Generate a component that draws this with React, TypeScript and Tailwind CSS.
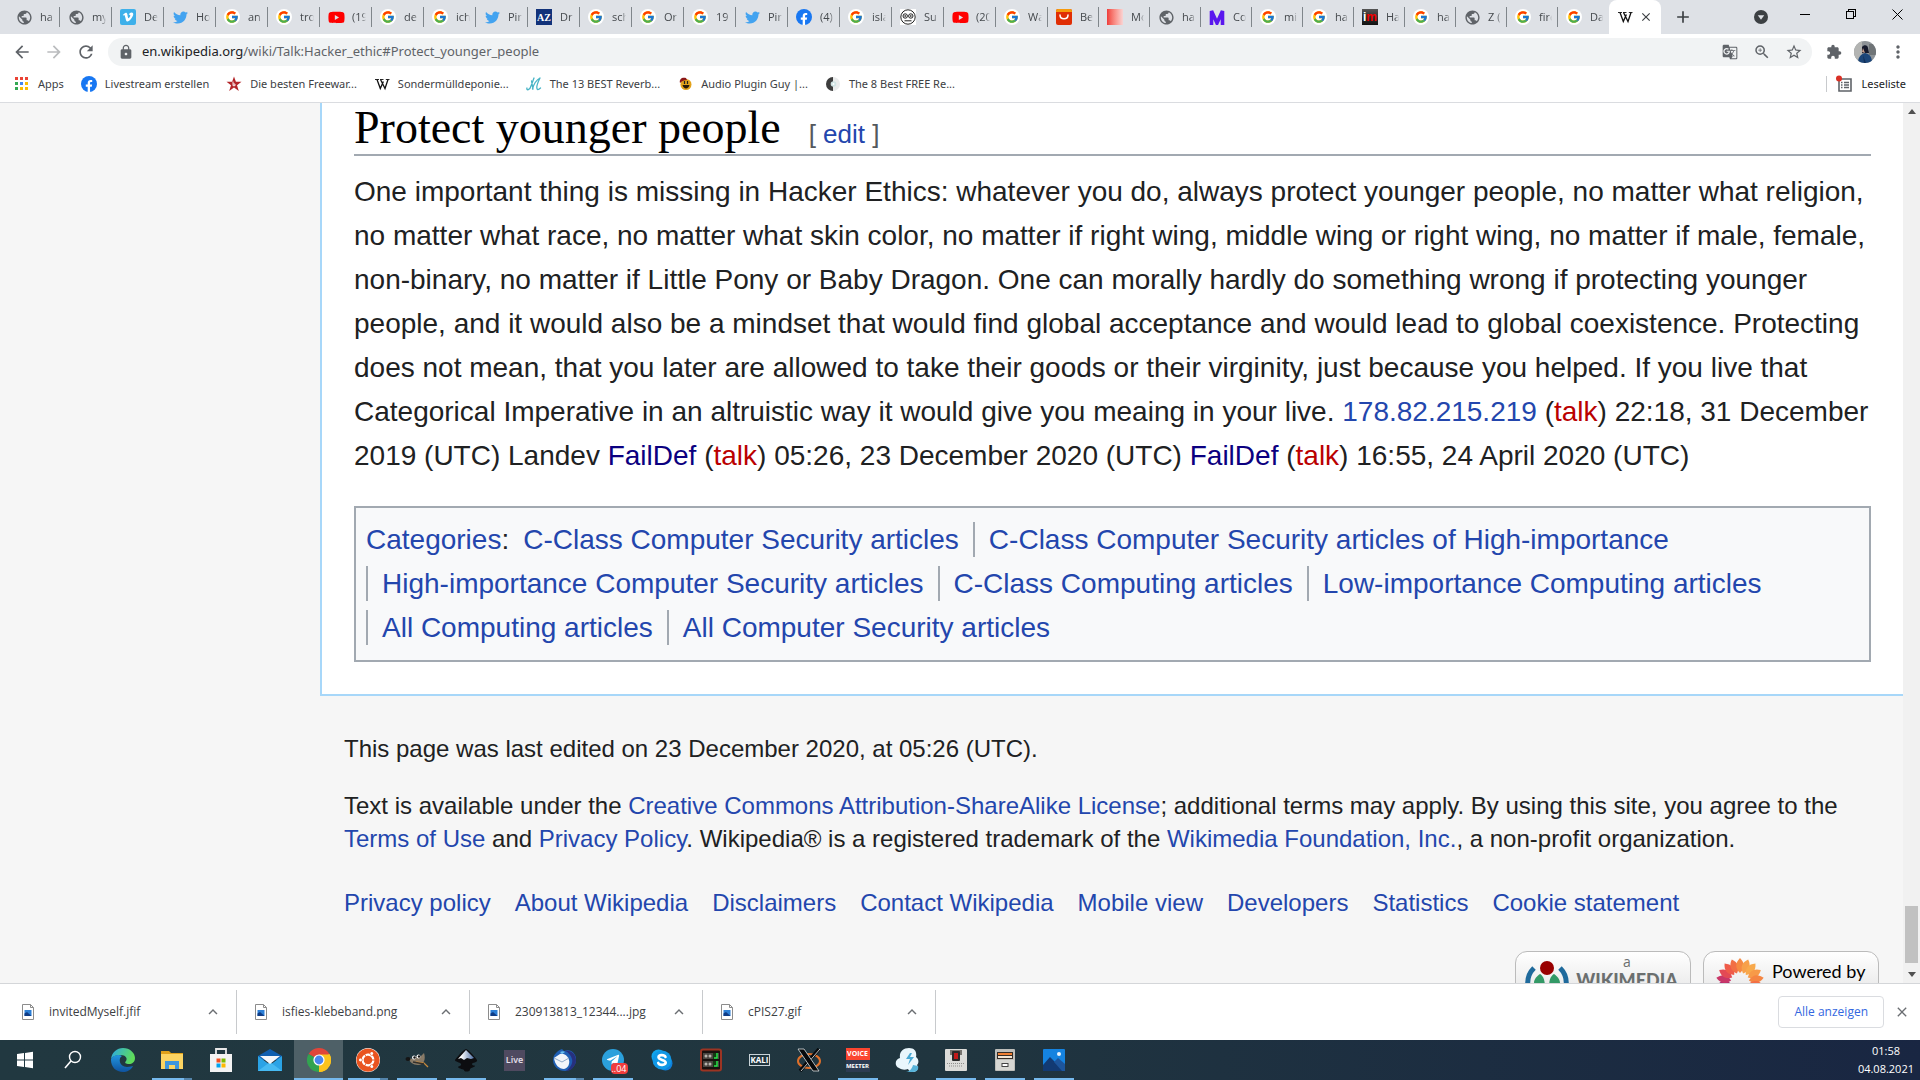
import React from 'react';
import { FcGoogle } from 'react-icons/fc';
import { FaTwitter, FaVimeoV, FaFacebookF, FaYoutube, FaUbuntu, FaTelegramPlane } from 'react-icons/fa';
import {
  MdAdd, MdArrowBack, MdArrowForward, MdClose, MdExtension, MdGTranslate, MdLock, MdMoreVert,
  MdPublic, MdRefresh, MdStarBorder, MdZoomIn, MdKeyboardArrowUp,
} from 'react-icons/md';

type Kind =
  | 'globe' | 'vimeo' | 'twitter' | 'google' | 'youtube' | 'az' | 'facebook' | 'face'
  | 'ali' | 'red' | 'm' | 'im' | 'wiki';

function Favicon({ kind }: { kind: Kind }) {
  switch (kind) {
    case 'globe':
      return <MdPublic className="size-[17px] shrink-0 text-[#5f6368]" />;
    case 'vimeo':
      return (
        <span className="flex size-4 shrink-0 items-center justify-center rounded-xs bg-[#3eb0ea]">
          <FaVimeoV className="size-3 text-white" />
        </span>
      );
    case 'twitter':
      return <FaTwitter className="size-[15px] shrink-0 text-[#43a3f0]" />;
    case 'google':
      return (
        <span className="flex size-4 shrink-0 items-center justify-center rounded-full bg-white">
          <FcGoogle className="size-[14px]" />
        </span>
      );
    case 'youtube':
      return <FaYoutube className="size-[17px] shrink-0 text-[#f00]" />;
    case 'az':
      return (
        <span className="flex size-4 shrink-0 items-center justify-center bg-[#12327a] font-['Liberation_Serif',serif] text-[10px] font-bold text-white">
          AZ
        </span>
      );
    case 'facebook':
      return (
        <span className="flex size-4 shrink-0 items-end justify-center rounded-full bg-[#1877f2]">
          <FaFacebookF className="size-3 text-white" />
        </span>
      );
    case 'face':
      return (
        <svg viewBox="0 0 16 16" className="size-4 shrink-0 bg-white" fill="none" stroke="#222">
          <circle cx="8" cy="8" r="7.2" />
          <circle cx="5.2" cy="7" r="2.2" />
          <circle cx="10.8" cy="7" r="2.2" />
          <circle cx="5.2" cy="7" r=".5" />
          <circle cx="10.8" cy="7" r=".5" />
          <path d="M4.5 11.8h7" />
        </svg>
      );
    case 'ali':
      return (
        <svg viewBox="0 0 16 16" className="size-4 shrink-0">
          <rect width="16" height="16" rx="2" fill="#e02e04" />
          <path d="M0 3V2a2 2 0 0 1 2-2h12a2 2 0 0 1 2 2v1z" fill="#f79a0c" />
          <path d="M4 6c0 5 8 5 8 0" fill="none" stroke="#fff" strokeWidth="1.5" strokeLinecap="round" />
        </svg>
      );
    case 'red':
      return <span className="size-4 shrink-0 bg-linear-to-r from-[#ee3a3a] to-[#f8d4d4]" />;
    case 'm':
      return (
        <svg viewBox="0 0 16 16" className="size-4 shrink-0">
          <path d="M2.500 16V2L8 14l5.500-12V16" fill="none" stroke="#5a17ee" strokeWidth="3.600" />
        </svg>
      );
    case 'im':
      return (
        <span className="flex size-4 shrink-0 items-center justify-center bg-linear-to-b from-[#555] to-[#111] font-['Liberation_Sans',sans-serif] text-[12px] font-bold">
          <span className="text-white">i</span>
          <span className="text-[#e00]">m</span>
        </span>
      );
    case 'wiki':
      return <WikiW />;
  }
}

function WikiW() {
  return (
    <svg viewBox="0 0 16 16" className="size-4 shrink-0" fill="none" stroke="#111">
      <path d="M3 3.500L6.300 12.500 9.400 5.500M6.500 3.500L11 12.500 14 3.500" strokeWidth="1.300" />
      <path d="M1 3.500h4M6 3.500h3.500M11.800 3.500H15.500" strokeWidth=".9" />
    </svg>
  );
}

const tabs: [Kind, string][] = [
  ['globe', 'ha'], ['globe', 'my'], ['vimeo', 'De'], ['twitter', 'Ho'], ['google', 'an'], ['google', 'tro'],
  ['youtube', '(19'], ['google', 'de'], ['google', 'ich'], ['twitter', 'Pin'], ['az', 'Dr'], ['google', 'sch'],
  ['google', 'Or'], ['google', '19'], ['twitter', 'Pin'], ['facebook', '(4)'], ['google', 'isla'], ['face', 'Su'],
  ['youtube', '(20'], ['google', 'Wa'], ['ali', 'Be'], ['red', 'Mo'], ['globe', 'ha'], ['m', 'Co'],
  ['google', 'mi'], ['google', 'ha'], ['im', 'Ha'], ['google', 'ha'], ['globe', 'Z ('], ['google', 'fire'], ['google', 'Da'],
];

function TabStrip() {
  return (
    <div className="flex h-[34px] shrink-0 bg-[#dee1e6] pl-2">
      <div className="flex min-w-0" role="tablist">
        {tabs.map(([kind, title], i) => (
          <button
            key={i}
            role="tab"
            className={`${i < 20 ? 'w-[52px]' : 'w-[51px]'} flex items-center overflow-hidden pl-2 text-left`}
          >
            <span className="flex w-4 shrink-0 justify-center"><Favicon kind={kind} /></span>
            <span className="ml-2 flex-1 overflow-hidden mask-r-from-70% text-[11px] whitespace-nowrap text-[#45494d]">
              {title}
            </span>
            <span className={`${i === 30 ? 'bg-transparent' : 'bg-[#80868b]'} ml-[5px] h-5 w-px shrink-0`} />
          </button>
        ))}
        <div className="flex w-[52px] items-center justify-between rounded-t-lg bg-white px-2">
          <button role="tab" aria-selected="true" aria-label="Talk:Hacker ethic"><WikiW /></button>
          <button aria-label="Close tab"><MdClose className="size-[14px] text-[#3c4043]" /></button>
        </div>
      </div>
      <button aria-label="New tab" className="ml-3"><MdAdd className="size-5 text-[#3c4043]" /></button>
      <div className="ml-auto flex">
        <button aria-label="Search tabs" className="mr-[14px]">
          <svg viewBox="0 0 14 14" className="size-[14px]">
            <circle cx="7" cy="7" r="7" fill="#3c4043" />
            <path d="M3.800 5.200h6.400L7 9.800z" fill="#dee1e6" />
          </svg>
        </button>
        <button aria-label="Minimize" className="flex h-7 w-[46px] items-center justify-center">
          <span className="h-px w-[10px] bg-black" />
        </button>
        <button aria-label="Restore" className="flex h-7 w-[46px] items-center justify-center">
          <svg viewBox="0 0 10 10" className="size-[10px]" fill="none" stroke="#000" shapeRendering="crispEdges">
            <path d="M.5 2.500h7v7h-7zM2.500 2.500v-2h7v7h-2" />
          </svg>
        </button>
        <button aria-label="Close" className="flex h-7 w-[46px] items-center justify-center">
          <svg viewBox="0 0 11 11" className="size-[11px]" stroke="#000"><path d="M.5.5l10 10M10.500.5l-10 10" /></svg>
        </button>
      </div>
    </div>
  );
}

function Toolbar() {
  return (
    <div className="flex h-9 shrink-0 items-center bg-white pr-3 pl-3 text-[#5f6368]">
      <button aria-label="Back" className="mr-3"><MdArrowBack className="size-5" /></button>
      <button aria-label="Forward" className="mr-3"><MdArrowForward className="size-5 text-[#babcbe]" /></button>
      <button aria-label="Reload" className="mr-3"><MdRefresh className="size-5" /></button>
      <div className="flex h-7 flex-1 items-center rounded-full bg-[#f1f3f4] pr-[2px] pl-[10px]">
        <MdLock className="size-4" />
        <span className="ml-2 font-['Noto_Sans',sans-serif] text-[13px]">
          <span className="text-[#202124]">en.wikipedia.org</span>/wiki/Talk:Hacker_ethic#Protect_younger_people
        </span>
        <div className="ml-auto flex items-center">
          <button aria-label="Translate" className="flex w-8 justify-center"><MdGTranslate className="size-4" /></button>
          <button aria-label="Zoom" className="flex w-8 justify-center"><MdZoomIn className="size-[18px]" /></button>
          <button aria-label="Bookmark" className="flex w-8 justify-center"><MdStarBorder className="size-[18px]" /></button>
        </div>
      </div>
      <button aria-label="Extensions" className="ml-[14px]"><MdExtension className="size-4" /></button>
      <button aria-label="Profile" className="ml-3">
        <svg viewBox="0 0 22 22" className="size-[22px] rounded-full">
          <rect width="22" height="22" fill="#8d9296" />
          <path d="M0 0h8v22H0z" fill="#b3b4b2" />
          <path d="M15 3h7v11h-7z" fill="#6f7477" />
          <path d="M8 6c2-3 6-2 6 1l1 5H8z" fill="#15192b" />
          <path d="M9 7l-1 4 3 1z" fill="#c9a08d" />
          <path d="M4 22c0-6 3-9 7-10 4 1 7 3 7 10z" fill="#1c4679" />
          <path d="M9 14l3 8h-2z" fill="#12305a" />
        </svg>
      </button>
      <button aria-label="Menu" className="ml-3"><MdMoreVert className="size-5" /></button>
    </div>
  );
}

const appColors = ['#ea4335', '#ea4335', '#ea4335', '#34a853', '#4285f4', '#fbbc04', '#34a853', '#fbbc04', '#fbbc04'];

const bookmarks: [string, React.ReactNode][] = [
  ['Apps', (
    <svg viewBox="0 0 16 16" className="size-4 shrink-0">
      {appColors.map((c, i) => <rect key={i} x={1 + (i % 3) * 5} y={1 + Math.floor(i / 3) * 5} width="3" height="3" fill={c} />)}
    </svg>
  )],
  ['Livestream erstellen', <Favicon kind="facebook" />],
  ['Die besten Freewar...', (
    <svg viewBox="0 0 16 16" className="size-4 shrink-0">
      <path d="M8 .5l1.900 5.300h5.600L11 9.200l1.800 5.800L8 11.600 3.200 15 5 9.200.5 5.800h5.600z" fill="#b3262a" />
      <path d="M7 5.500v4.200h2V8H7" fill="none" stroke="#fff" strokeWidth=".9" />
    </svg>
  )],
  ['Sondermülldeponie...', <WikiW />],
  ['The 13 BEST Reverb...', (
    <svg viewBox="0 0 16 16" className="size-4 shrink-0" fill="none" stroke="#48b4c6" strokeWidth="1.300" strokeLinecap="round">
      <path d="M1 12c-1 3 3 2 4-2l3-8M6.500 13c1-4 4-9 7.500-11M5.500 5L7 13M14 2c-2 4-4 10-2.500 11.500 1 .5 2-.5 3-1.500" />
    </svg>
  )],
  ['Audio Plugin Guy |...', (
    <svg viewBox="0 0 16 16" className="size-4 shrink-0">
      <circle cx="9" cy="8.500" r="5.500" fill="#e3a21a" />
      <path d="M3 7c-1-4 2-6 6-5l1 2C7 4 5 5 3 7z" fill="#8a1717" />
      <path d="M7.500 5v3M10.500 5v3" stroke="#222" strokeWidth="1.200" />
      <path d="M5.500 9h7c-1 4.500-6 4.500-7 0z" fill="#2a1a08" />
    </svg>
  )],
  ['The 8 Best FREE Re...', (
    <svg viewBox="0 0 16 16" className="size-4 shrink-0">
      <circle cx="8" cy="8" r="7" fill="#e9ebeb" />
      <path d="M8 1a7 7 0 0 0 0 14z" fill="#3d3d3d" />
      <circle cx="8.500" cy="8" r="2.800" fill="#cfe3e3" />
      <circle cx="8.500" cy="8" r="1" fill="#fff" />
    </svg>
  )],
];

function BookmarksBar() {
  return (
    <div className="flex h-[33px] shrink-0 items-center gap-[17px] border-b border-[#dadce0] bg-white pr-[14px] pb-1 pl-[14px] font-['Noto_Sans',sans-serif] text-[11px] text-[#3c4043]">
      {bookmarks.map(([label, icon]) => (
        <a key={label} href="#" className="flex items-center gap-2 whitespace-nowrap">{icon}{label}</a>
      ))}
      <div className="ml-auto flex items-center text-[#202124]">
        <span className="mr-2 h-4 w-px bg-[#c8cacd]" />
        <button className="flex items-center gap-2">
          <svg viewBox="0 0 18 18" className="size-[18px]">
            <path d="M4 4h12v12H4z" fill="none" stroke="#5f6368" strokeWidth="1.600" />
            <path d="M6 7.500h1.500M9 7.500h5M6 10h1.500M9 10h5M6 12.500h1.500M9 12.500h5" stroke="#5f6368" strokeWidth="1.300" />
            <circle cx="4" cy="3.500" r="3" fill="#d93025" />
          </svg>
          Leseliste
        </button>
      </div>
    </div>
  );
}

const link = 'text-[#2346ad]';
const A = ({ children, className = link }: { children: React.ReactNode; className?: string }) => (
  <a href="#" className={className}>{children}</a>
);

const categories = [
  'C-Class Computer Security articles',
  'C-Class Computer Security articles of High-importance',
  'High-importance Computer Security articles',
  'C-Class Computing articles',
  'Low-importance Computing articles',
  'All Computing articles',
  'All Computer Security articles',
];

function Article() {
  return (
    <main className="border-b-2 border-l-2 border-[#a7d7f9] bg-white pr-8 pb-8 pl-8 text-[28px] leading-[44px] text-[#202122]">
      <h2 className="flex h-[53px] items-baseline border-b-2 border-[#a2a9b1] font-['Liberation_Serif',serif] text-[46px] leading-[49px] text-black">
        Protect younger people
        <span className="ml-7 font-['Liberation_Sans',sans-serif] text-[26px] text-[#54595d]">
          [ <A>edit</A> ]
        </span>
      </h2>
      <p className="mt-[14px]">
        One important thing is missing in Hacker Ethics: whatever you do, always protect younger people, no matter what
        religion, no matter what race, no matter what skin color, no matter if right wing, middle wing or right wing, no
        matter if male, female, non-binary, no matter if Little Pony or Baby Dragon. One can morally hardly do something
        wrong if protecting younger people, and it would also be a mindset that would find global acceptance and would
        lead to global coexistence. Protecting does not mean, that you later are allowed to take their goods or their
        virginity, just because you helped. If you live that Categorical Imperative in an altruistic way it would give
        you meaing in your live. <A>178.82.215.219</A> (<A className="text-[#ba0000]">talk</A>) 22:18, 31 December 2019
        (UTC) Landev <A className="text-[#0b0080]">FailDef</A> (<A className="text-[#ba0000]">talk</A>) 05:26, 23
        December 2020 (UTC) <A className="text-[#0b0080]">FailDef</A> (<A className="text-[#ba0000]">talk</A>) 16:55, 24
        April 2020 (UTC)
      </p>
      <div className="mt-7 flex flex-wrap gap-y-[9px] border-2 border-[#a2a9b1] bg-[#f8f9fa] px-[10px] pt-[14px] pb-[15px] leading-[35px]">
        <span><A>Categories</A>:</span>
        {categories.map((c, i) => (
          <span key={c} className={`${i === 0 ? '' : 'border-l-2'} border-[#a2a9b1] px-[14px]`}><A>{c}</A></span>
        ))}
      </div>
    </main>
  );
}

const footerLinks = [
  'Privacy policy', 'About Wikipedia', 'Disclaimers', 'Contact Wikipedia', 'Mobile view', 'Developers', 'Statistics',
  'Cookie statement',
];

const petals = [-100, -80, -60, -40, -20, 0, 20, 40, 60, 80, 100];
const petalColors = ['#b02a70', '#c93768', '#e34a55', '#ef5b49', '#f26f45', '#f58a43', '#f7a04a', '#f8a94c', '#f79a48', '#f58542', '#f26f45'];

function Footer() {
  return (
    <footer className="pt-9 pr-6 pl-6 text-[24px] leading-[33px] text-[#202122]">
      <p>This page was last edited on 23 December 2020, at 05:26 (UTC).</p>
      <p className="mt-6">
        Text is available under the <A>Creative Commons Attribution-ShareAlike License</A>; additional terms may apply. By
        using this site, you agree to the <A>Terms of Use</A> and <A>Privacy Policy</A>. Wikipedia® is a registered
        trademark of the <A>Wikimedia Foundation, Inc.</A>, a non-profit organization.
      </p>
      <nav className="mt-[31px] flex gap-6">
        {footerLinks.map((l) => <A key={l}>{l}</A>)}
      </nav>
      <div className="mt-8 flex justify-end gap-3">
        <a href="#" className="flex h-[62px] w-44 rounded-xl border border-[#bbb] bg-linear-to-b from-white to-[#ddd] pl-2">
          <svg viewBox="0 0 48 48" className="mt-2 size-12">
            <circle cx="23" cy="8" r="7" fill="#900" />
            <path d="M10 23c0-4 3-7 6-9 3 2 5 5 5 14-6-1-10-1-11-5zM36 23c0-4-3-7-6-9-3 2-5 5-5 14 6-1 10-1 11-5z" fill="#396" />
            <path d="M10 8a21 21 0 0 0 0 30M36 8a21 21 0 0 1 0 30" fill="none" stroke="#1f6a9c" strokeWidth="5" />
          </svg>
          <span className="flex flex-1 flex-col items-center pr-2 text-[14px] text-[#6b6f6f]">
            <span className="h-[17px] leading-[20px] font-['Open_Sans',sans-serif]">a</span>
            <span className="font-['Lato',sans-serif] text-[18px] leading-[22px] font-black">WIKIMEDIA</span>
          </span>
        </a>
        <a href="#" className="flex h-[62px] w-44 rounded-xl border border-[#bbb] bg-linear-to-b from-white to-[#ddd] pl-3 text-black">
          <svg viewBox="0 0 48 48" className="mt-[6px] size-12">
            {petals.map((a, i) => (
              <path key={a} d="M24 0c5 5 5 10 0 15-5-5-5-10 0-15z" fill={petalColors[i]} transform={`rotate(${a} 24 24)`} />
            ))}
          </svg>
          <span className="mt-2 ml-2 flex flex-col font-['Lato',sans-serif] text-[18px] leading-[22px]">
            <span>Powered by</span>
            <span className="font-bold">MediaWiki</span>
          </span>
        </a>
      </div>
    </footer>
  );
}

function Scrollbar() {
  return (
    <div className="flex w-[17px] shrink-0 flex-col items-center justify-between bg-[#f1f1f1] py-[6px]" aria-hidden="true">
      <svg viewBox="0 0 8 5" className="h-[5px] w-2"><path d="M0 5l4-5 4 5z" fill="#505050" /></svg>
      <span className="mt-auto mb-[9px] h-[57px] w-[13px] bg-[#c1c1c1]" />
      <svg viewBox="0 0 8 5" className="h-[5px] w-2"><path d="M0 0l4 5 4-5z" fill="#505050" /></svg>
    </div>
  );
}

const downloads = ['invitedMyself.jfif', 'isfies-klebeband.png', '230913813_12344....jpg', 'cPIS27.gif'];

function Downloads() {
  return (
    <div className="flex h-[57px] shrink-0 items-center border-t border-[#d4d6d9] bg-white pl-1 text-[12px] text-[#3c4043]">
      {downloads.map((d) => (
        <div key={d} className="flex h-11 w-[233px] items-center border-r border-[#c8cacd] pr-[14px] pl-[18px]">
          <svg viewBox="0 0 12 16" className="mr-[15px] h-4 w-3">
            <path d="M.5.5h8l3 3v12H.5z" fill="#fff" stroke="#8c8c8c" />
            <path d="M8.500.5v3h3" fill="none" stroke="#8c8c8c" />
            <rect x="2.500" y="6" width="7" height="6" fill="#2c7fd6" />
            <path d="M2.500 12V9.500L5 8l4.500 4z" fill="#0f3c86" />
          </svg>
          <a href="#">{d}</a>
          <button aria-label={`Options for ${d}`} className="ml-auto"><MdKeyboardArrowUp className="size-[18px] text-[#6b6e72]" /></button>
        </div>
      ))}
      <button className="ml-auto h-8 rounded-sm border border-[#dadce0] px-[15px] text-[#3367e0]">Alle anzeigen</button>
      <button aria-label="Close downloads" className="mr-[10px] ml-[10px]"><MdClose className="size-4 text-[#6b6e72]" /></button>
    </div>
  );
}

const S = ({ children }: { children: React.ReactNode }) => <svg viewBox="0 0 24 24" className="size-6">{children}</svg>;

const apps: { name: string; run?: 'one' | 'many' | 'active'; icon: React.ReactNode }[] = [
  { name: 'Start', icon: <S><path d="M4 6l7-1v6.500H4zM12 5l8-1.200v7.700h-8zM4 12.500h7V19l-7-1zM12 12.500h8v7.700L12 19z" fill="#fff" /></S> },
  { name: 'Search', icon: <S><circle cx="13" cy="9" r="5.500" fill="none" stroke="#fff" strokeWidth="1.400" /><path d="M9 13l-6 7" stroke="#fff" strokeWidth="1.600" /></S> },
  { name: 'Edge', icon: (
    <S>
      <defs>
        <linearGradient id="edgeTop" x1="0" y1="0" x2="1" y2="0.3"><stop offset="0" stopColor="#2aa8e8" /><stop offset="1" stopColor="#5fdc5a" /></linearGradient>
        <linearGradient id="edgeBottom" x1="0" y1="0" x2="0" y2="1"><stop offset="0" stopColor="#2296e0" /><stop offset="1" stopColor="#0f539f" /></linearGradient>
      </defs>
      <path d="M0 11C1 4 6 0 12 0c7 0 12 5 12 10 0 4-3 6-6 6s-5-1-3-3c2-3-1-6-5-6-5 0-8 1-10 4z" fill="url(#edgeTop)" />
      <path d="M0 11c2-4 8-5 11-3-4 2-3 11 5 11 3 0 5-1 6-1-2 4-6 6-10 6C5 24 0 19 0 12z" fill="url(#edgeBottom)" />
    </S>
  ) },
  { name: 'Explorer', run: 'many', icon: <S><path d="M1 3h8l2 2h12v5H1z" fill="#e0a11a" /><path d="M1 6h22v15H1z" fill="#fcd462" /><path d="M5 21v-8h14v8h-4v-4H9v4z" fill="#3f96dc" /></S> },
  { name: 'Store', icon: <S><path d="M7 6V1h10v5" fill="none" stroke="#e8e8e8" strokeWidth="1.800" /><path d="M1 6h22v18H1z" fill="#f3f3f3" /><path d="M7.500 10.500h4v4h-4z" fill="#f25022" /><path d="M12.500 10.500h4v4h-4z" fill="#7fba00" /><path d="M7.500 15.500h4v4h-4z" fill="#00a4ef" /><path d="M12.500 15.500h4v4h-4z" fill="#ffb900" /></S> },
  { name: 'Mail', icon: <S><path d="M0 8l12-7 12 7v4H0z" fill="#0f5fb0" /><path d="M0 8v15h24V8l-12 9z" fill="#2aa3e6" /><path d="M0 23l12-9 12 9z" fill="#46baf2" /><path d="M2 8h20l-10 8z" fill="#f4f7fa" /></S> },
  { name: 'Chrome', run: 'active', icon: (
    <S>
      <path d="M12 12L1.600 6A12 12 0 0 1 22.400 6z" fill="#e0453a" />
      <path d="M12 12l10.400-6A12 12 0 0 1 12 24z" fill="#fbc31c" />
      <path d="M12 12v12A12 12 0 0 1 1.600 6z" fill="#32a350" />
      <path d="M12 6.500h10.700A12 12 0 0 1 12 24l5-9z" fill="#fbc31c" />
      <circle cx="12" cy="12" r="5.600" fill="#fff" /><circle cx="12" cy="12" r="4.400" fill="#4a86ee" />
    </S>
  ) },
  { name: 'Ubuntu', run: 'many', icon: <FaUbuntu className="size-6 rounded-full bg-white text-[#e95420]" /> },
  { name: 'GIMP', run: 'one', icon: <S><path d="M4 10c4 2 7 0 9-3l2 2 4-4c2 6 0 12-6 12-5 0-9-3-9-7z" fill="#887a67" /><ellipse cx="3" cy="11" rx="2.500" ry="2" fill="#151515" /><circle cx="9" cy="9.500" r="2" fill="#fff" /><circle cx="13.500" cy="8.500" r="2" fill="#fff" /><circle cx="9.500" cy="9.500" r="1.200" fill="#111" /><circle cx="14" cy="8.500" r="1.200" fill="#111" /><path d="M11 14l8 1 4 4" stroke="#c98b3d" strokeWidth="1.300" fill="none" /><path d="M8 14l11 2" stroke="#32302c" strokeWidth="1.500" /></S> },
  { name: 'Inkscape', run: 'one', icon: (
    <S>
      <defs><linearGradient id="peak" x1="0" y1="0" x2="1" y2="0"><stop offset="0.2" stopColor="#fff" /><stop offset="1" stopColor="#4d6fa5" /></linearGradient></defs>
      <path d="M12 1c2 0 10 9 11 11 1 3-5 2-5 4s3 1 3 2-6 2-5 4c-1 2-6 2-6 0 0-1-5-1-6-3 0-1 4-1 3-3S1 14 1 12C2 10 10 1 12 1z" fill="#0c0d10" />
      <path d="M12 2l8 8-3 1-4-1-3 2-3-2-3 1z" fill="url(#peak)" />
    </S>
  ) },
  { name: 'Live', icon: <span className="flex size-[21px] items-center justify-center bg-[#4f4a60] text-[9px] font-semibold text-[#e6e1ec]">Live</span> },
  { name: 'Thunderbird', run: 'many', icon: (
    <S>
      <path d="M10 1l2 2c7-3 13 3 12 10-1 6-6 10-11 10C6 23 1 18 1 12c0-5 4-9 9-11z" fill="#1f5fb4" />
      <path d="M13 3c7-1 11 4 11 10-1 6-5 10-10 10 5-4 7-8 6-12-1-4-4-7-7-8z" fill="#27307f" />
      <path d="M2 10l6-4c4-1 8 2 9 6s-1 8-5 9c-5 0-9-4-10-11z" fill="#f1f5fa" />
      <path d="M2 10l8 4 7-4" fill="none" stroke="#8fa9c9" />
      <path d="M8 4c2-1 4-1 5 0l-3 2z" fill="#6ac0f0" />
    </S>
  ) },
  { name: 'Telegram', run: 'one', icon: (
    <span className="relative flex size-[22px] items-center justify-center rounded-full bg-[#2ba0dc]">
      <FaTelegramPlane className="size-[14px] text-white" />
      <span className="absolute top-[14px] left-[9px] rounded-sm bg-[#f03d3d] px-px text-[9px] leading-[11px] text-white">..04</span>
    </span>
  ) },
  { name: 'Skype', icon: <S><circle cx="8.500" cy="8.500" r="7" fill="#12a5ec" /><circle cx="15.500" cy="15.500" r="7" fill="#0f80dc" /><circle cx="12" cy="12" r="9.500" fill="#1098e6" /><path d="M15.500 9c-1-2.500-7-2.500-7 .3s7.200 2.400 7.200 5.200-6.500 3.300-7.500.4" fill="none" stroke="#fff" strokeWidth="2.600" strokeLinecap="round" /></S> },
  { name: 'Rack', icon: <S><rect x="2" y="1.500" width="20" height="21" rx="2" fill="#18100e" stroke="#9c3423" strokeWidth="2" /><path d="M4 5h16v6H4zM4 13h16v6H4z" fill="#4a4541" /><circle cx="7" cy="8" r="1.500" fill="#b9b4ae" /><circle cx="11" cy="8" r="1.500" fill="#b9b4ae" /><circle cx="7" cy="16" r="1.500" fill="#b9b4ae" /><circle cx="11" cy="16" r="1.500" fill="#b9b4ae" /><path d="M14 5h5v6h-5zM14 13h5v6h-5z" fill="#123a12" /><path d="M18 5v5h-3M18 13v5h-3" fill="none" stroke="#2ce04c" strokeWidth="1.500" /></S> },
  { name: 'Kali', icon: <span className="flex h-3 w-[21px] items-center justify-center border border-[#c9d3d8] text-[8px] font-bold text-white">KALI</span> },
  { name: 'X server', icon: <S><ellipse cx="12" cy="13" rx="11" ry="7" fill="none" stroke="#e0702a" strokeWidth="2" /><path d="M22 1L3 23" stroke="#07090b" strokeWidth="3.500" /><path d="M23 1L4 23" stroke="#cfd4d6" strokeWidth=".9" /><path d="M1 1h6l15 22h-6z" fill="#07090b" stroke="#d9dee0" strokeWidth=".8" /></S> },
  { name: 'Voicemeeter', run: 'one', icon: (
    <span className="flex w-6 flex-col items-center text-[7px] leading-3 font-bold text-white">
      <span className="w-full bg-[#fb4630] text-center">VOICE</span>
      <span className="w-full bg-[#2c3b52] text-center text-[6px]">MEETER</span>
    </span>
  ) },
  { name: 'Cloud', icon: <S><path d="M4 20c-5-2-4-9 1-10C4 4 8 0 14 0c6 0 8 4 7 9 3 2 3 6 1 8 2 3 0 7-4 7-3 0-4-1-5-3-3 1-6 1-9-1z" fill="#e9f6fc" /><path d="M11 24c3 0 6-3 7-7l5 1c1 3-1 6-5 6z" fill="#57b3d9" /><path d="M15 5l-4 6h4l-2 6 6-8h-4l2-4z" fill="#4aa9d4" /></S> },
  { name: 'Interface', run: 'one', icon: <S><rect x="1" y="1" width="22" height="22" rx="1" fill="#dcdcd9" /><path d="M6 2h12v5H6z" fill="#77746f" /><rect x="8" y="3" width="8" height="10" rx="1" fill="#2b2b2b" /><rect x="10" y="5" width="4" height="6" fill="#c41a1a" /><path d="M3 15.500h18M5 18h14" stroke="#8d8d8a" strokeDasharray="1 1" /></S> },
  { name: 'Archive', run: 'one', icon: <S><rect x="2" y="1" width="20" height="22" rx="1" fill="#bdbdb9" /><rect x="4" y="4" width="16" height="7" fill="#352c25" /><path d="M5 5h14v2H5z" fill="#ef7f32" /><path d="M5 8h14v2H5z" fill="#f3e6d5" /><path d="M3 12h18v10H3z" fill="#d7d7d3" /><rect x="9" y="15.500" width="6" height="3" fill="#fff" stroke="#444" /></S> },
  { name: 'Photos', run: 'one', icon: <S><rect x="1" y="1" width="22" height="22" rx="1" fill="#1583e0" /><path d="M1 17l7-8 14 14H1z" fill="#123a73" /><path d="M12 14l4-4 7 6v7h-3z" fill="#1d559c" /><circle cx="17" cy="6" r="2" fill="#e9f4fd" /></S> },
];

function Taskbar() {
  return (
    <div className="flex h-10 shrink-0 bg-linear-to-r from-[#213840] via-[#20353f] to-[#192642] text-white">
      {apps.map(({ name, run, icon }) => (
        <button
          key={name}
          aria-label={name}
          className={`${run === 'active' ? 'bg-[#4e6067]' : ''} flex w-[49px] flex-col items-center justify-between`}
        >
          <span className="flex h-[38px] items-center pt-[2px]">{icon}</span>
          {run === 'active' && <span className="h-[2px] w-full bg-[#76b9ed]" />}
          {run === 'one' && <span className="h-[2px] w-10 bg-[#76b9ed]" />}
          {run === 'many' && <span className="h-[2px] w-10 border-r-8 border-[#5484aa] bg-[#76b9ed]" />}
        </button>
      ))}
      <div className="mr-[6px] ml-auto flex flex-col items-center justify-center text-[11px] leading-[18px]">
        <span>01:58</span>
        <span>04.08.2021</span>
      </div>
    </div>
  );
}

export default function App() {
  return (
    <div className="flex h-screen flex-col overflow-hidden font-['Open_Sans',sans-serif]">
      <TabStrip />
      <Toolbar />
      <BookmarksBar />
      <div className="flex min-h-0 flex-1 bg-[#f6f6f6]">
        <div className="h-full flex-1 overflow-hidden pl-80 font-['Liberation_Sans',sans-serif]">
          <Article />
          <Footer />
        </div>
        <Scrollbar />
      </div>
      <Downloads />
      <Taskbar />
    </div>
  );
}
